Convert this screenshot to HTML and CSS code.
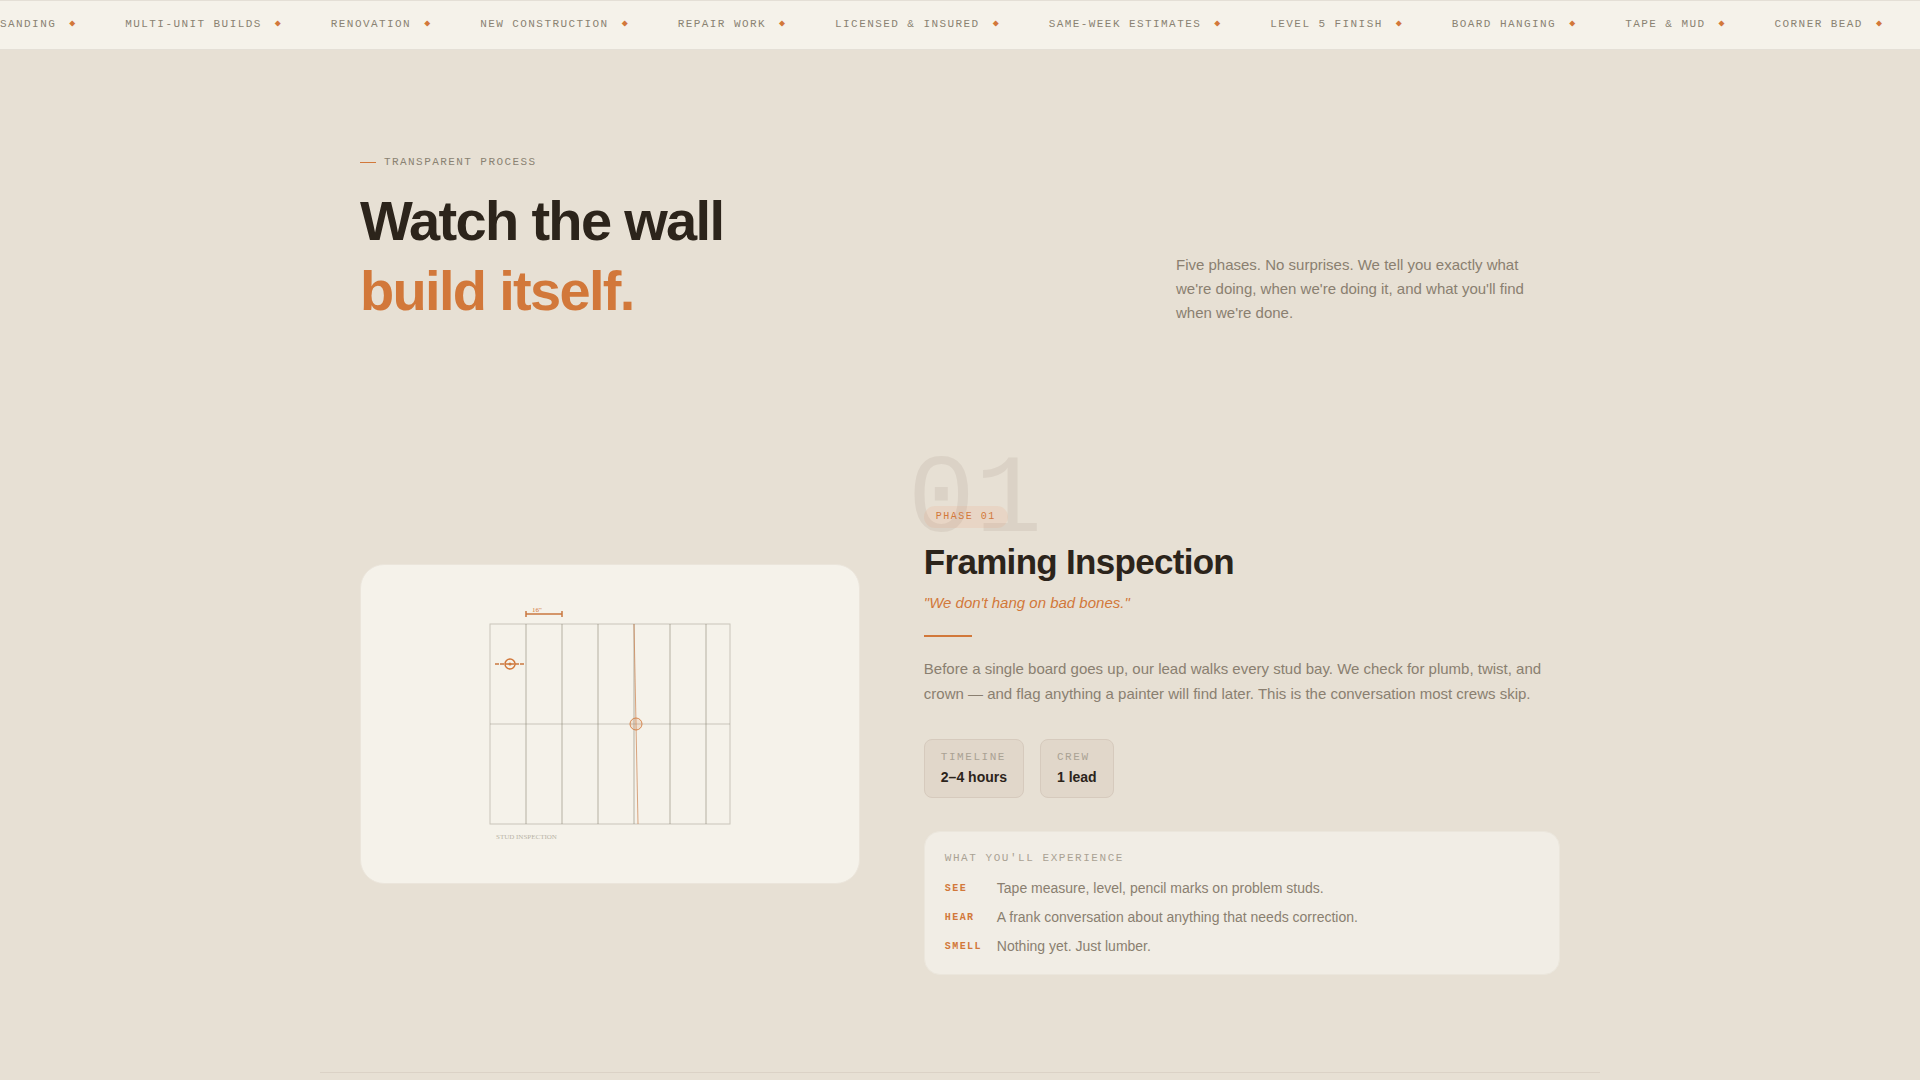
FILE: index.html
```html
<!DOCTYPE html>
<html lang="en">
<head>
<meta charset="utf-8">
<meta name="viewport" content="width=device-width, initial-scale=1">
<title>Our process</title>
<link rel="stylesheet" href="styles.css">
</head>
<body>
<div class="ticker">
  <ul class="ticker-track">
    <li>Sanding</li>
    <li>Multi-unit builds</li>
    <li>Renovation</li>
    <li>New construction</li>
    <li>Repair work</li>
    <li>Licensed &amp; insured</li>
    <li>Same-week estimates</li>
    <li>Level 5 finish</li>
    <li>Board hanging</li>
    <li>Tape &amp; mud</li>
    <li>Corner bead</li>
  </ul>
</div>
<main class="process">
  <header class="process-header">
    <div>
      <p class="eyebrow">Transparent process</p>
      <h1 class="title">Watch the wall<br><span class="accent">build itself.</span></h1>
    </div>
    <p class="intro">Five phases. No surprises. We tell you exactly what we're doing, when we're doing it, and what you'll find when we're done.</p>
  </header>

  <section class="phase">
    <div class="illustration">
      <svg width="280" height="240" viewBox="0 0 280 240" role="img" aria-label="Stud inspection diagram">
        <g fill="none" stroke="#8a8272" stroke-opacity=".4">
          <rect x="20" y="20" width="240" height="200" stroke-width="1"/>
          <path d="M56 20V220M92 20V220M128 20V220M164 20V220M200 20V220M236 20V220" stroke-width="1.5"/>
          <path d="M20 120H260" stroke-width="1"/>
        </g>
        <path d="M164 20L168 220" stroke="#c97840" stroke-opacity=".65"/>
        <circle cx="166" cy="120" r="6" fill="#d2783a" fill-opacity=".15" stroke="#d2783a" stroke-opacity=".85"/>
        <path d="M56 10H92M56 7V13M92 7V13" fill="none" stroke="#c97840" stroke-width="1.5"/>
        <path d="M25 60H54" stroke="#c97840" stroke-width="1.5" stroke-dasharray="4 1"/>
        <circle cx="40" cy="60" r="5" fill="none" stroke="#d2783a" stroke-width="1.5"/>
        <circle cx="40" cy="60" r="1.5" fill="#d2783a"/>
        <text class="dimension" x="62" y="8">16"</text>
        <text class="caption" x="26" y="235">STUD INSPECTION</text>
      </svg>
    </div>
    <div class="details">
      <span class="number" aria-hidden="true">01</span>
      <span class="badge">Phase 01</span>
      <h2 class="phase-title">Framing Inspection</h2>
      <p class="quote">"We don't hang on bad bones."</p>
      <hr class="rule">
      <p class="body">Before a single board goes up, our lead walks every stud bay. We check for plumb, twist, and crown — and flag anything a painter will find later. This is the conversation most crews skip.</p>
      <dl class="facts">
        <div class="fact"><dt>Timeline</dt><dd>2–4 hours</dd></div>
        <div class="fact"><dt>Crew</dt><dd>1 lead</dd></div>
      </dl>
      <div class="experience">
        <h3>What you'll experience</h3>
        <dl>
          <dt>See</dt><dd>Tape measure, level, pencil marks on problem studs.</dd>
          <dt>Hear</dt><dd>A frank conversation about anything that needs correction.</dd>
          <dt>Smell</dt><dd>Nothing yet. Just lumber.</dd>
        </dl>
      </div>
    </div>
  </section>
</main>
</body>
</html>
```
FILE: styles.css
```css
* { box-sizing: border-box; }
body, h1, h2, h3, p, dl, dd, ul { margin: 0; }
body {
  background: #e7e0d4;
  color: #2c241b;
  font-family: "Liberation Sans", Arial, sans-serif;
}
.ticker {
  overflow: hidden;
  background: #f5f2ea;
  border-top: 1px solid #e4dfd6;
  border-bottom: 1px solid #e4dfd6;
}
.ticker-track {
  display: flex;
  gap: 50px;
  width: max-content;
  padding: 15px 0 17px;
  list-style: none;
  font: 11px/16px "Liberation Mono", monospace;
  letter-spacing: .13em;
  text-transform: uppercase;
  color: #8a8272;
}
.ticker-track li {
  display: flex;
  gap: 13px;
  white-space: nowrap;
}
.ticker-track li::after {
  content: "◆";
  color: #d2783a;
  font-size: 10px;
  letter-spacing: 0;
}
.process {
  max-width: 1280px;
  margin: 0 auto;
}
.process-header {
  display: flex;
  justify-content: space-between;
  align-items: flex-end;
  gap: 40px;
  padding: 104px 40px 0;
}
.eyebrow {
  display: flex;
  align-items: center;
  gap: 8px;
  margin-bottom: 16px;
  font: 11px/16px "Liberation Mono", monospace;
  letter-spacing: .13em;
  text-transform: uppercase;
  color: #8a8272;
}
.eyebrow::before {
  content: "";
  width: 16px;
  height: 1px;
  background: #d2783a;
}
.title {
  font-size: 56px;
  line-height: 70px;
  letter-spacing: -.03em;
}
.accent { color: #d2783a; }
.intro {
  max-width: 384px;
  padding: 0 24px 1px 0;
  font-size: 15px;
  line-height: 24px;
  color: #8a7f70;
}
.phase {
  display: grid;
  grid-template-columns: 11fr 14fr;
  gap: 64px;
  align-items: center;
  margin-top: 48px;
  padding: 98px 40px 97px;
  border-bottom: 1px solid #dbd2c6;
}
.illustration {
  display: flex;
  align-items: center;
  justify-content: center;
  height: 320px;
  background: #f5f2ea;
  border: 1px solid #ebe5db;
  border-radius: 24px;
}
.dimension, .caption {
  font: 7px "Liberation Serif", serif;
}
.dimension { fill: #d2783a; }
.caption { fill: #b8b2a5; }
.details {
  position: relative;
  padding-top: 34px;
}
.number {
  position: absolute;
  top: -26px;
  left: -16px;
  font: 112px/112px "Liberation Mono", monospace;
  color: #dbd2c6;
}
.badge {
  position: relative;
  display: block;
  width: fit-content;
  padding: 4px 12px;
  border-radius: 11px;
  background: rgba(240, 140, 90, .12);
  font: 10px/14px "Liberation Mono", monospace;
  letter-spacing: .15em;
  text-transform: uppercase;
  color: #d2783a;
}
.phase-title {
  margin-top: 12px;
  font-size: 35px;
  line-height: 44px;
  letter-spacing: -.02em;
}
.quote {
  margin-top: 7px;
  font-size: 15px;
  line-height: 24px;
  font-style: italic;
  color: #d2783a;
}
.rule {
  width: 48px;
  height: 2px;
  margin: 20px 0 19px;
  border: 0;
  background: #d2783a;
}
.body {
  font-size: 15px;
  line-height: 25px;
  color: #8a7f70;
}
.facts {
  display: flex;
  gap: 16px;
  margin-top: 33px;
}
.fact {
  padding: 9px 16px;
  background: #e1d7ca;
  border: 1px solid #d6cabd;
  border-radius: 8px;
}
.fact dt, .experience h3 {
  font: 11px/17px "Liberation Mono", monospace;
  letter-spacing: .14em;
  text-transform: uppercase;
  color: #aaa294;
}
.fact dd {
  font-size: 14px;
  line-height: 22px;
  font-weight: 700;
}
.experience {
  margin-top: 33px;
  padding: 18px 20px 17px;
  background: #f1ede5;
  border: 1px solid #ebe6dc;
  border-radius: 16px;
}
.experience dl {
  display: grid;
  grid-template-columns: 40px 1fr;
  gap: 8px 12px;
  margin-top: 11px;
}
.experience dt {
  font: 700 10px/21px "Liberation Mono", monospace;
  letter-spacing: .14em;
  text-transform: uppercase;
  color: #d2783a;
}
.experience dd {
  font-size: 14px;
  line-height: 21px;
  color: #8a7f70;
}
```
